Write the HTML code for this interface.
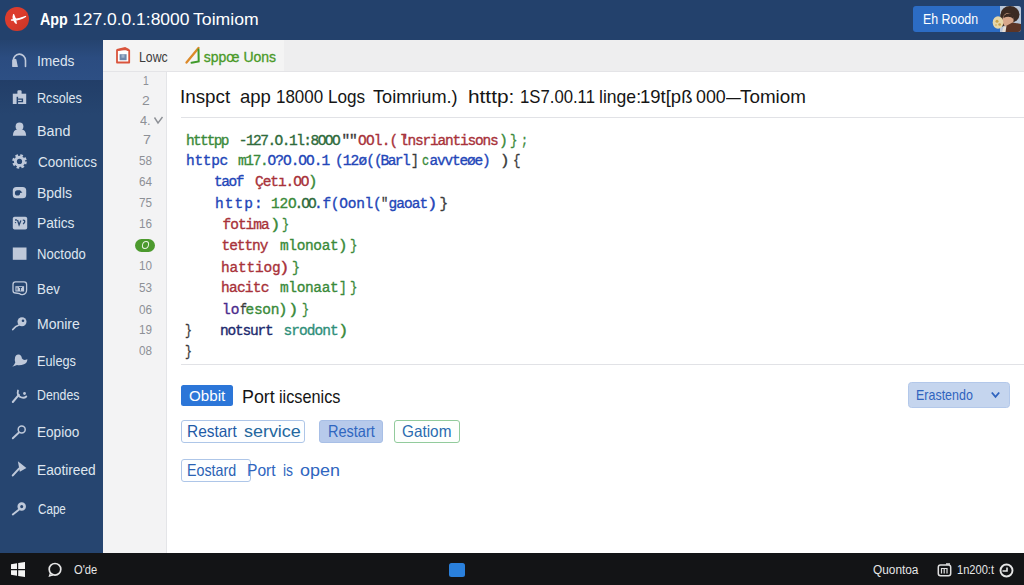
<!DOCTYPE html>
<html><head><meta charset="utf-8">
<style>
*{margin:0;padding:0;box-sizing:border-box}
html,body{width:1024px;height:585px;overflow:hidden;background:#fff;font-family:"Liberation Sans",sans-serif}
.a{position:absolute;white-space:pre}
</style></head><body>
<!-- backgrounds -->
<div class="a" style="left:0;top:0;width:1024px;height:40px;background:#23416c"></div>
<div class="a" style="left:0;top:40px;width:103px;height:513px;background:linear-gradient(#223e68 40px,#264570 75px)"></div>
<div class="a" style="left:0;top:40px;width:103px;height:40px;background:linear-gradient(#25436f,#2b4c80 45%,#2d4f84)"></div>
<div class="a" style="left:103px;top:40px;width:921px;height:31px;background:#eeeeef"></div>
<div class="a" style="left:103px;top:40px;width:181px;height:31px;background:#f4f4f4"></div>
<div class="a" style="left:103px;top:71px;width:64px;height:482px;background:#f3f3f4"></div>
<div class="a" style="left:166px;top:71px;width:1px;height:482px;background:#e4e5e8"></div>
<div class="a" style="left:103px;top:71px;width:921px;height:1px;background:#e4e4e7"></div>
<div class="a" style="left:181px;top:117px;width:843px;height:1px;background:#e1e2e6"></div>
<div class="a" style="left:181px;top:364px;width:843px;height:1px;background:#e1e2e6"></div>
<div class="a" style="left:0;top:553px;width:1024px;height:32px;background:#131416"></div>

<!-- top bar -->
<div class="a" style="left:4.800px;top:6.800px;width:24px;height:24.400px;border-radius:50%;background:linear-gradient(135deg,#dc3c2d 45%,#c83526)"></div>
<svg class="a" style="left:5px;top:7px" width="24" height="24" viewBox="0 0 24 24"><path d="M6.500 13 Q13 12.500 20.500 9.500 Q13 14 6.500 13z M8.600 7.600 Q7 12 11.200 16.400 Q10.800 12 8.600 7.600z" stroke="#fff" stroke-width="1.300" fill="#fff" stroke-linejoin="round"/></svg>
<div class="a" style="left:913px;top:6px;width:108px;height:26px;border-radius:3px;background:#2c6cc4"></div>
<div class="a" style="left:999.500px;top:6px;width:21.500px;height:26px;border-radius:0 3px 3px 0;overflow:hidden;background:#b9c6d8">
<svg style="position:absolute;left:0;top:0" width="22" height="26" viewBox="9.500 0 22 26">
<ellipse cx="19.500" cy="8.500" rx="9.500" ry="8.500" fill="#3b2a22"/>
<path d="M10 8 q-1 8 1 13 l4 -2z" fill="#3b2a22"/>
<ellipse cx="17.500" cy="14" rx="5.600" ry="7" fill="#d8a78b"/>
<path d="M13 10 q4 -4 9 -2 l1 5 q-4 -4 -10 -1z" fill="#3b2a22"/>
<path d="M12 26 L14.500 20.500 L22 16.500 L31 18 V26z" fill="#5b3526"/>
<path d="M11.500 26 l1.500 -5 l3 -1.200 l-1 6.200z" fill="#e8e0d6"/>
</svg></div>
<svg class="a" style="left:991px;top:15px" width="14" height="15" viewBox="0 0 14 15"><ellipse cx="7" cy="7.500" rx="5.300" ry="6.200" fill="#e6d6a8"/><circle cx="6" cy="6.200" r="1.500" fill="#c9a24a"/><circle cx="8.600" cy="9.500" r="1.300" fill="#c9a24a"/><circle cx="5" cy="10" r="1" fill="#d6b870"/></svg>

<!-- sidebar icons -->
<svg class="a" style="left:0;top:40px" width="36" height="513" viewBox="0 40 36 513">
<g fill="none" stroke="#bfc9da" stroke-linecap="round">
<!-- imeds: arch + block -->
<path d="M13.200 66 V61 a6 6.500 0 0 1 12.300 -.5 V66.500" stroke-width="1.600"/>
<!-- monire -->
<path d="M12.800 329.500 Q15.500 326 19 325" stroke-width="1.800"/>
<!-- dendes wrench -->
<path d="M12.800 402 L18.800 394.800" stroke-width="2"/><path d="M18 390.500 q-1.500 5.500 3.500 7 q3 .8 4.800 -1" stroke-width="1.800"/>
<!-- eopioo magnifier -->
<path d="M12.800 438.300 L18.700 432.800" stroke-width="1.900"/><circle cx="21.700" cy="429.600" r="3.500" stroke-width="1.500"/>
<!-- eaotireed -->
<path d="M12.800 475.400 L19 468.600" stroke-width="2.100"/>
<!-- cape -->
<path d="M12.800 514.500 L18.800 509.800" stroke-width="2"/><circle cx="21.700" cy="506.600" r="2.900" stroke-width="2.700"/>
</g>
<g fill="#bfc9da">
<path d="M12.300 66.900 V60 q2 -2 4 -.8 L17.900 66.900z"/>
<!-- rcsoles -->
<rect x="12.800" y="93.700" width="13.400" height="10.300"/><rect x="17.400" y="90.200" width="4.200" height="4.500" rx="1.200"/>
<!-- band -->
<circle cx="19.500" cy="126.500" r="3.900"/><path d="M12.800 135.800 q.5 -6.400 4.500 -6.400 h4.400 q4 0 4.500 6.400 z"/>
<!-- gear -->
<circle cx="19.500" cy="161.400" r="5.600"/><circle cx="19.500" cy="161.400" r="6" fill="none" stroke="#bfc9da" stroke-width="2.600" stroke-dasharray="2.600 2.110"/>
<!-- bpdls -->
<rect x="12.800" y="187" width="13.400" height="11.300" rx="3.600"/>
<!-- patics -->
<rect x="12.800" y="216.800" width="14.400" height="12.800" rx="1.800"/>
<!-- noctodo -->
<rect x="12.800" y="247.500" width="13.700" height="12.300"/>
<!-- monire head -->
<circle cx="22" cy="321.800" r="4.500"/>
<!-- eulegs -->
<path d="M18.500 354.600 a3.300 3.300 0 0 1 3.300 3.600 q1 1.600 3 1.800 l2.600 -.8 q-.2 3.800 -3.400 5 q-3.500 1.400 -7 .8 l-4.700 1.800 q2.200 -2.400 3 -4.400 q-1 -2.200 -.3 -4.400 a3.300 3.300 0 0 1 3.500 -3.400z"/>
<!-- eaotireed head -->
<path d="M17.900 461.300 L26.400 467.900 L19.800 471.700 Z"/>
<circle cx="24.500" cy="393.500" r="1.400"/>
</g>
<g fill="#264570" stroke="none">
<rect x="16.600" y="96.800" width="1.500" height="7.200"/><path d="M18.100 98.600 h5 v3.600 h-5 v-1.100 h3.600 v-1.300 h-3.600z"/>
<circle cx="19.500" cy="161.400" r="2.600"/>
<path d="M17.500 190.300 a2.600 2.600 0 1 0 2.600 2.600 l2.300 -.4 l-2.400 -2.300 z"/>
<circle cx="23" cy="320.800" r="1.300"/>
<circle cx="16" cy="220" r=".9"/><circle cx="15.500" cy="222.600" r=".7"/>
</g>
<path d="M17.500 220 l1.600 4.800 l1.800 -4.200 M22.800 220.300 q2.500 -.5 1.800 1.800 l-1.400 2" stroke="#264570" stroke-width="1.300" fill="none"/>
<!-- bev -->
<path d="M15.500 281.900 H24 q2.600 0 2.600 2.600 V290 q0 4 -4 4.600 q-2 .4 -3 -1 l-4 -.6 q-2.600 0 -2.600 -2.600 V284.500 q0 -2.600 2.500 -2.600z" fill="none" stroke="#bfc9da" stroke-width="1.300"/>
<rect x="15.400" y="286.200" width="8.700" height="5.300" fill="#bfc9da"/>
<path d="M17 287.500 v3 M19 287.500 h3 M20.500 287.500 v3.200" stroke="#264570" stroke-width=".9" fill="none"/>
</svg>

<!-- tabs -->
<svg class="a" style="left:115px;top:46px" width="17" height="19" viewBox="0 0 17 19"><path d="M2 4.200 L11 3.200 L14.200 4.500 V16.500 H2z" fill="#fff" stroke="#d9543c" stroke-width="1.800" stroke-linejoin="round"/><path d="M2 4 L10 2.200 L14 4.200" stroke="#d9543c" stroke-width="2.200" fill="none"/><rect x="4.600" y="8.200" width="7" height="6" fill="#6f88ab"/><rect x="6.500" y="8.200" width="3" height="3.500" fill="#9fb3cc"/></svg>
<svg class="a" style="left:184px;top:46px" width="18" height="19" viewBox="0 0 18 19"><path d="M2.500 16.500 L14.500 2" stroke="#dc8a2a" stroke-width="2.300" fill="none" stroke-linecap="round"/><path d="M14.500 3.500 L14.700 15.500 L7.500 16.800" stroke="#3f9a2a" stroke-width="2" fill="none" stroke-linecap="round"/></svg>

<!-- gutter extras -->
<svg class="a" style="left:153px;top:116px" width="11" height="9" viewBox="0 0 11 9"><path d="M1.500 1.500 L5 7 L9.500 1" stroke="#8d9096" stroke-width="1.400" fill="none"/></svg>
<div class="a" style="left:135px;top:238.500px;width:19.500px;height:13px;border-radius:6.500px;background:#4c9a2e"></div>
<div class="a" style="left:141.500px;top:241px;width:7px;height:8px;border-radius:50%;border:1.300px solid #e9f3e2;transform:skewX(-10deg)"></div>

<!-- controls -->
<div class="a" style="left:180.500px;top:384.500px;width:52px;height:21px;border-radius:2.500px;background:#2c76d8"></div>
<div class="a" style="left:908px;top:382px;width:102px;height:25.500px;border-radius:3.500px;background:#c5d5ee;border:1px solid #b3c8ea"></div>
<svg class="a" style="left:990px;top:390px" width="11" height="9" viewBox="0 0 11 9"><path d="M1.800 2.500 L5.500 6.800 L9.200 2.500" stroke="#2f63be" stroke-width="1.800" fill="none"/></svg>
<div class="a" style="left:180.500px;top:419.500px;width:124.500px;height:23.500px;border-radius:3px;border:1px solid #aec6e8;background:#fdfeff"></div>
<div class="a" style="left:318.500px;top:419.500px;width:64.500px;height:23.500px;border-radius:3px;background:#b7caeb;border:1px solid #a8bfe6"></div>
<div class="a" style="left:393.500px;top:419.500px;width:66.500px;height:23.500px;border-radius:3px;border:1.200px solid #92cb9c;background:#fdfffd"></div>
<div class="a" style="left:180.500px;top:458.500px;width:70px;height:23.500px;border-radius:3px;border:1px solid #aec6e8;background:#fdfeff"></div>

<!-- taskbar -->
<svg class="a" style="left:10.500px;top:562px" width="14" height="15" viewBox="0 0 14 15"><path d="M0 2.200 L6 1.200 V7 H0z M7.200 1 L14 0 V7 H7.200z M0 8.200 H6 V13.800 L0 12.800z M7.200 8.200 H14 V15 L7.200 14z" fill="#f4f4f4"/></svg>
<svg class="a" style="left:47px;top:561px" width="16" height="17" viewBox="0 0 16 17"><circle cx="8" cy="8.300" r="5.800" stroke="#e6e6e6" stroke-width="1.700" fill="none"/><path d="M3.500 12 L2.500 15 L6 13.800" stroke="#e6e6e6" stroke-width="1.300" fill="none"/></svg>
<div class="a" style="left:448.500px;top:562.500px;width:16.500px;height:14px;border-radius:2.500px;background:#2a80dc"></div>
<svg class="a" style="left:937px;top:563px" width="15" height="15" viewBox="0 0 15 15"><rect x="1.300" y="2" width="12.400" height="10.800" rx="2.200" stroke="#e0e0e0" stroke-width="1.500" fill="none"/><path d="M4.500 10.500 V5.500 h5.500 v5 M7.200 5.500 v5" stroke="#e0e0e0" stroke-width="1.200" fill="none"/><path d="M9 1 h4" stroke="#e0e0e0" stroke-width="1.500"/></svg>
<svg class="a" style="left:998px;top:562px" width="17" height="17" viewBox="0 0 17 17"><circle cx="8.500" cy="8.500" r="6" stroke="#e6e6e6" stroke-width="1.900" fill="none"/><path d="M4.500 9 H9 V5.500" stroke="#e6e6e6" stroke-width="1.600" fill="none"/></svg>

<div class="a" style='left:39.50px;top:8.61px;font:bold 17px/21px "Liberation Sans",sans-serif;color:#fff;transform-origin:0 0;transform:scale(0.8420,1);'>App</div>
<div class="a" style='left:72.72px;top:8.61px;font:normal 17px/21px "Liberation Sans",sans-serif;color:#fff;transform-origin:0 0;transform:scale(1.0269,1);'>127.0.0.1:8000</div>
<div class="a" style='left:193.00px;top:8.61px;font:normal 17px/21px "Liberation Sans",sans-serif;color:#fff;transform-origin:0 0;transform:scale(1.0376,1);'>Toimiom</div>
<div class="a" style='left:922.62px;top:9.90px;font:normal 14px/18px "Liberation Sans",sans-serif;color:#fff;transform-origin:0 0;transform:scale(0.8846,1);'>Eh Roodn</div>
<div class="a" style='left:37.02px;top:52.15px;font:normal 14px/18px "Liberation Sans",sans-serif;color:#dfe5ef;transform-origin:0 0;transform:scale(0.9832,1);'>Imeds</div>
<div class="a" style='left:37.10px;top:88.65px;font:normal 14px/18px "Liberation Sans",sans-serif;color:#dfe5ef;transform-origin:0 0;transform:scale(0.9018,1);'>Rcsoles</div>
<div class="a" style='left:36.98px;top:121.65px;font:normal 14px/18px "Liberation Sans",sans-serif;color:#dfe5ef;transform-origin:0 0;transform:scale(1.0191,1);'>Band</div>
<div class="a" style='left:38.00px;top:153.15px;font:normal 14px/18px "Liberation Sans",sans-serif;color:#dfe5ef;transform-origin:0 0;transform:scale(0.9598,1);'>Coonticcs</div>
<div class="a" style='left:37.00px;top:184.15px;font:normal 14px/18px "Liberation Sans",sans-serif;color:#dfe5ef;'>Bpdls</div>
<div class="a" style='left:37.02px;top:214.15px;font:normal 14px/18px "Liberation Sans",sans-serif;color:#dfe5ef;transform-origin:0 0;transform:scale(0.9832,1);'>Patics</div>
<div class="a" style='left:37.07px;top:244.90px;font:normal 14px/18px "Liberation Sans",sans-serif;color:#dfe5ef;transform-origin:0 0;transform:scale(0.9346,1);'>Noctodo</div>
<div class="a" style='left:37.05px;top:279.90px;font:normal 14px/18px "Liberation Sans",sans-serif;color:#dfe5ef;transform-origin:0 0;transform:scale(0.9514,1);'>Bev</div>
<div class="a" style='left:37.00px;top:314.90px;font:normal 14px/18px "Liberation Sans",sans-serif;color:#dfe5ef;'>Monire</div>
<div class="a" style='left:37.09px;top:351.65px;font:normal 14px/18px "Liberation Sans",sans-serif;color:#dfe5ef;transform-origin:0 0;transform:scale(0.9089,1);'>Eulegs</div>
<div class="a" style='left:37.12px;top:386.15px;font:normal 14px/18px "Liberation Sans",sans-serif;color:#dfe5ef;transform-origin:0 0;transform:scale(0.8782,1);'>Dendes</div>
<div class="a" style='left:37.03px;top:423.15px;font:normal 14px/18px "Liberation Sans",sans-serif;color:#dfe5ef;transform-origin:0 0;transform:scale(0.9695,1);'>Eopioo</div>
<div class="a" style='left:37.02px;top:460.65px;font:normal 14px/18px "Liberation Sans",sans-serif;color:#dfe5ef;transform-origin:0 0;transform:scale(0.9803,1);'>Eaotireed</div>
<div class="a" style='left:38.00px;top:499.90px;font:normal 14px/18px "Liberation Sans",sans-serif;color:#dfe5ef;transform-origin:0 0;transform:scale(0.8313,1);'>Cape</div>
<div class="a" style='left:139.26px;top:47.81px;font:normal 14.7px/18px "Liberation Sans",sans-serif;color:#3c3c3c;transform-origin:0 0;transform:scale(0.8378,1);'>Lowc</div>
<div class="a" style='left:203.75px;top:48.15px;font:normal 14px/18px "Liberation Sans",sans-serif;color:#4a9a28;-webkit-text-stroke:0.3px #4a9a28;'>sppœ Uons</div>
<div class="a" style='left:142.60px;top:72.70px;font:normal 13px/16px "Liberation Sans",sans-serif;color:#8d9096;transform-origin:0 0;transform:scale(0.8000,1);'>1</div>
<div class="a" style='left:142.00px;top:92.70px;font:normal 13px/16px "Liberation Sans",sans-serif;color:#8d9096;transform-origin:0 0;transform:scale(1.0714,1);'>2</div>
<div class="a" style='left:140.00px;top:112.70px;font:normal 13px/16px "Liberation Sans",sans-serif;color:#8d9096;transform-origin:0 0;transform:scale(0.9775,1);'>4.</div>
<div class="a" style='left:142.60px;top:131.90px;font:normal 13px/16px "Liberation Sans",sans-serif;color:#8d9096;transform-origin:0 0;transform:scale(1.1000,1);'>7</div>
<div class="a" style='left:139.20px;top:152.70px;font:normal 13px/16px "Liberation Sans",sans-serif;color:#8d9096;transform-origin:0 0;transform:scale(0.8995,1);'>58</div>
<div class="a" style='left:139.20px;top:173.70px;font:normal 13px/16px "Liberation Sans",sans-serif;color:#8d9096;transform-origin:0 0;transform:scale(0.8995,1);'>64</div>
<div class="a" style='left:139.20px;top:194.70px;font:normal 13px/16px "Liberation Sans",sans-serif;color:#8d9096;transform-origin:0 0;transform:scale(0.8995,1);'>75</div>
<div class="a" style='left:139.20px;top:215.90px;font:normal 13px/16px "Liberation Sans",sans-serif;color:#8d9096;transform-origin:0 0;transform:scale(0.8995,1);'>16</div>
<div class="a" style='left:139.20px;top:258.20px;font:normal 13px/16px "Liberation Sans",sans-serif;color:#8d9096;transform-origin:0 0;transform:scale(0.8995,1);'>10</div>
<div class="a" style='left:139.20px;top:280.20px;font:normal 13px/16px "Liberation Sans",sans-serif;color:#8d9096;transform-origin:0 0;transform:scale(0.8995,1);'>53</div>
<div class="a" style='left:139.20px;top:301.70px;font:normal 13px/16px "Liberation Sans",sans-serif;color:#8d9096;transform-origin:0 0;transform:scale(0.8995,1);'>06</div>
<div class="a" style='left:139.20px;top:322.20px;font:normal 13px/16px "Liberation Sans",sans-serif;color:#8d9096;transform-origin:0 0;transform:scale(0.8995,1);'>19</div>
<div class="a" style='left:139.20px;top:343.20px;font:normal 13px/16px "Liberation Sans",sans-serif;color:#8d9096;transform-origin:0 0;transform:scale(0.8995,1);'>08</div>
<div class="a" style='left:179.98px;top:84.89px;font:normal 18.5px/23px "Liberation Sans",sans-serif;color:#151515;transform-origin:0 0;transform:scale(1.0162,1);'>Inspct</div>
<div class="a" style='left:240.00px;top:84.89px;font:normal 18.5px/23px "Liberation Sans",sans-serif;color:#151515;'>app</div>
<div class="a" style='left:276.08px;top:84.89px;font:normal 18.5px/23px "Liberation Sans",sans-serif;color:#151515;transform-origin:0 0;transform:scale(0.9172,1);'>18000</div>
<div class="a" style='left:328.07px;top:84.89px;font:normal 18.5px/23px "Liberation Sans",sans-serif;color:#151515;transform-origin:0 0;transform:scale(0.9262,1);'>Logs</div>
<div class="a" style='left:373.00px;top:84.89px;font:normal 18.5px/23px "Liberation Sans",sans-serif;color:#151515;transform-origin:0 0;transform:scale(0.9806,1);'>Toimrium.)</div>
<div class="a" style='left:467.67px;top:84.89px;font:normal 18.5px/23px "Liberation Sans",sans-serif;color:#151515;transform-origin:0 0;transform:scale(1.1257,1);'>htttp:</div>
<div class="a" style='left:519.60px;top:84.89px;font:normal 18.5px/23px "Liberation Sans",sans-serif;color:#151515;transform-origin:0 0;transform:scale(0.9034,1);'>1S7.00.11</div>
<div class="a" style='left:599.05px;top:84.89px;font:normal 18.5px/23px "Liberation Sans",sans-serif;color:#151515;transform-origin:0 0;transform:scale(0.9504,1);'>linge:</div>
<div class="a" style='left:640.00px;top:84.89px;font:normal 18.5px/23px "Liberation Sans",sans-serif;color:#151515;'>19t[pß</div>
<div class="a" style='left:696.00px;top:84.89px;font:normal 18.5px/23px "Liberation Sans",sans-serif;color:#151515;transform-origin:0 0;transform:scale(0.9648,1);'>000</div>
<div class="a" style='left:726.00px;top:84.89px;font:normal 18.5px/23px "Liberation Sans",sans-serif;color:#151515;transform-origin:0 0;transform:scale(0.8000,1);'>—</div>
<div class="a" style='left:739.50px;top:84.89px;font:normal 18.5px/23px "Liberation Sans",sans-serif;color:#151515;transform-origin:0 0;transform:scale(1.0179,1);'>Tomiom</div>
<div class="a" style='left:186.00px;top:130.99px;font:normal 14.5px/18px "Liberation Mono",sans-serif;color:#3a8a3a;letter-spacing:-1.751px;-webkit-text-stroke:0.35px #3a8a3a;transform-origin:0 0;transform:scale(1.0000,1.05);'>htttpp</div>
<div class="a" style='left:238.75px;top:130.99px;font:normal 14.5px/18px "Liberation Mono",sans-serif;color:#2f6b3c;letter-spacing:-1.528px;-webkit-text-stroke:0.35px #2f6b3c;transform-origin:0 0;transform:scale(1.0000,1.05);'>-127.O.1l:8OOO</div>
<div class="a" style='left:341.50px;top:130.99px;font:normal 14.5px/18px "Liberation Mono",sans-serif;color:#3a3a3a;letter-spacing:-1.201px;-webkit-text-stroke:0.35px #3a3a3a;transform-origin:0 0;transform:scale(1.0000,1.05);'>""</div>
<div class="a" style='left:358.00px;top:130.99px;font:normal 14.5px/18px "Liberation Mono",sans-serif;color:#a8323a;letter-spacing:-0.826px;-webkit-text-stroke:0.35px #a8323a;transform-origin:0 0;transform:scale(1.0000,1.05);'>OOl.(</div>
<div class="a" style='left:399.50px;top:130.99px;font:normal 14.5px/18px "Liberation Mono",sans-serif;color:#a8323a;letter-spacing:-7.201px;-webkit-text-stroke:0.35px #a8323a;transform-origin:0 0;transform:scale(1.0000,1.05);'>l'</div>
<div class="a" style='left:407.50px;top:130.99px;font:normal 14.5px/18px "Liberation Mono",sans-serif;color:#a8323a;letter-spacing:-1.201px;-webkit-text-stroke:0.35px #a8323a;transform-origin:0 0;transform:scale(1.0000,1.05);'>nsriantisons</div>
<div class="a" style='left:499.46px;top:130.99px;font:normal 14.5px/18px "Liberation Mono",sans-serif;color:#3a8a3a;-webkit-text-stroke:0.35px #3a8a3a;transform-origin:0 0;transform:scale(1.0200,1.05);'>)</div>
<div class="a" style='left:510.14px;top:130.99px;font:normal 14.5px/18px "Liberation Mono",sans-serif;color:#3a8a3a;-webkit-text-stroke:0.35px #3a8a3a;transform-origin:0 0;transform:scale(0.8571,1.05);'>}</div>
<div class="a" style='left:521.10px;top:130.99px;font:normal 14.5px/18px "Liberation Mono",sans-serif;color:#3a8a3a;-webkit-text-stroke:0.35px #3a8a3a;transform-origin:0 0;transform:scale(0.8000,1.05);'>;</div>
<div class="a" style='left:186.00px;top:151.49px;font:normal 14.5px/18px "Liberation Mono",sans-serif;color:#2346b8;letter-spacing:-0.326px;-webkit-text-stroke:0.35px #2346b8;transform-origin:0 0;transform:scale(1.0000,1.05);'>httpc</div>
<div class="a" style='left:238.00px;top:151.49px;font:normal 14.5px/18px "Liberation Mono",sans-serif;color:#3a8a3a;letter-spacing:-1.368px;-webkit-text-stroke:0.35px #3a8a3a;transform-origin:0 0;transform:scale(1.0000,1.05);'>m17.</div>
<div class="a" style='left:267.50px;top:151.49px;font:normal 14.5px/18px "Liberation Mono",sans-serif;color:#2346b8;letter-spacing:-0.987px;-webkit-text-stroke:0.35px #2346b8;transform-origin:0 0;transform:scale(1.0000,1.05);'>O?O.OO.1</div>
<div class="a" style='left:335.00px;top:151.49px;font:normal 14.5px/18px "Liberation Mono",sans-serif;color:#2346b8;letter-spacing:-0.901px;-webkit-text-stroke:0.35px #2346b8;transform-origin:0 0;transform:scale(1.0000,1.05);'>(12ø((</div>
<div class="a" style='left:380.50px;top:151.49px;font:normal 14.5px/18px "Liberation Mono",sans-serif;color:#2346b8;letter-spacing:-1.535px;-webkit-text-stroke:0.35px #2346b8;transform-origin:0 0;transform:scale(1.0000,1.05);'>Barl</div>
<div class="a" style='left:410.60px;top:151.49px;font:normal 14.5px/18px "Liberation Mono",sans-serif;color:#3a3a3a;-webkit-text-stroke:0.35px #3a3a3a;transform-origin:0 0;transform:scale(0.9000,1.05);'>]</div>
<div class="a" style='left:422.00px;top:151.49px;font:normal 14.5px/18px "Liberation Mono",sans-serif;color:#3a8a3a;-webkit-text-stroke:0.35px #3a8a3a;transform-origin:0 0;transform:scale(0.8125,1.05);'>c</div>
<div class="a" style='left:429.50px;top:151.49px;font:normal 14.5px/18px "Liberation Mono",sans-serif;color:#2346b8;letter-spacing:-1.201px;-webkit-text-stroke:0.35px #2346b8;transform-origin:0 0;transform:scale(1.0000,1.05);'>avvteøe)</div>
<div class="a" style='left:500.30px;top:151.49px;font:normal 14.5px/18px "Liberation Mono",sans-serif;color:#3a3a3a;-webkit-text-stroke:0.35px #3a3a3a;transform-origin:0 0;transform:scale(1.1000,1.05);'>)</div>
<div class="a" style='left:513.14px;top:151.49px;font:normal 14.5px/18px "Liberation Mono",sans-serif;color:#3a3a3a;-webkit-text-stroke:0.35px #3a3a3a;transform-origin:0 0;transform:scale(0.8571,1.05);'>{</div>
<div class="a" style='left:214.00px;top:172.49px;font:normal 14.5px/18px "Liberation Mono",sans-serif;color:#2346b8;letter-spacing:-1.451px;-webkit-text-stroke:0.35px #2346b8;transform-origin:0 0;transform:scale(1.0000,1.05);'>taof</div>
<div class="a" style='left:255.00px;top:172.49px;font:normal 14.5px/18px "Liberation Mono",sans-serif;color:#a8323a;letter-spacing:-1.076px;-webkit-text-stroke:0.35px #a8323a;transform-origin:0 0;transform:scale(1.0000,1.05);'>Çetı.OO</div>
<div class="a" style='left:308.30px;top:172.49px;font:normal 14.5px/18px "Liberation Mono",sans-serif;color:#3a8a3a;-webkit-text-stroke:0.35px #3a8a3a;transform-origin:0 0;transform:scale(1.1000,1.05);'>)</div>
<div class="a" style='left:215.00px;top:193.99px;font:normal 14.5px/18px "Liberation Mono",sans-serif;color:#2346b8;letter-spacing:1.049px;-webkit-text-stroke:0.35px #2346b8;transform-origin:0 0;transform:scale(1.0000,1.05);'>http:</div>
<div class="a" style='left:271.00px;top:193.99px;font:normal 14.5px/18px "Liberation Mono",sans-serif;color:#3a8a3a;letter-spacing:-0.201px;-webkit-text-stroke:0.35px #3a8a3a;transform-origin:0 0;transform:scale(1.0000,1.05);'>12O</div>
<div class="a" style='left:294.50px;top:193.99px;font:normal 14.5px/18px "Liberation Mono",sans-serif;color:#2f6b3c;letter-spacing:-1.951px;-webkit-text-stroke:0.35px #2f6b3c;transform-origin:0 0;transform:scale(1.0000,1.05);'>.OO</div>
<div class="a" style='left:314.00px;top:193.99px;font:normal 14.5px/18px "Liberation Mono",sans-serif;color:#2346b8;letter-spacing:-0.273px;-webkit-text-stroke:0.35px #2346b8;transform-origin:0 0;transform:scale(1.0000,1.05);'>.f(Oonl(</div>
<div class="a" style='left:381.17px;top:193.99px;font:normal 14.5px/18px "Liberation Mono",sans-serif;color:#3a3a3a;-webkit-text-stroke:0.35px #3a3a3a;transform-origin:0 0;transform:scale(0.8333,1.05);'>"</div>
<div class="a" style='left:388.50px;top:193.99px;font:normal 14.5px/18px "Liberation Mono",sans-serif;color:#2346b8;letter-spacing:-0.951px;-webkit-text-stroke:0.35px #2346b8;transform-origin:0 0;transform:scale(1.0000,1.05);'>gaoat</div>
<div class="a" style='left:426.60px;top:193.99px;font:normal 14.5px/18px "Liberation Mono",sans-serif;color:#2346b8;-webkit-text-stroke:0.35px #2346b8;transform-origin:0 0;transform:scale(1.2000,1.05);'>)</div>
<div class="a" style='left:439.50px;top:193.99px;font:normal 14.5px/18px "Liberation Mono",sans-serif;color:#3a3a3a;-webkit-text-stroke:0.35px #3a3a3a;transform-origin:0 0;transform:scale(1.0000,1.05);'>}</div>
<div class="a" style='left:222.50px;top:214.99px;font:normal 14.5px/18px "Liberation Mono",sans-serif;color:#a8323a;letter-spacing:-1.001px;-webkit-text-stroke:0.35px #a8323a;transform-origin:0 0;transform:scale(1.0000,1.05);'>fotima</div>
<div class="a" style='left:269.60px;top:214.99px;font:normal 14.5px/18px "Liberation Mono",sans-serif;color:#3a8a3a;-webkit-text-stroke:0.35px #3a8a3a;transform-origin:0 0;transform:scale(1.2000,1.05);'>)</div>
<div class="a" style='left:282.18px;top:214.99px;font:normal 14.5px/18px "Liberation Mono",sans-serif;color:#3a8a3a;-webkit-text-stroke:0.35px #3a8a3a;transform-origin:0 0;transform:scale(0.8214,1.05);'>}</div>
<div class="a" style='left:221.50px;top:236.24px;font:normal 14.5px/18px "Liberation Mono",sans-serif;color:#a8323a;letter-spacing:-1.051px;-webkit-text-stroke:0.35px #a8323a;transform-origin:0 0;transform:scale(1.0000,1.05);'>tettny</div>
<div class="a" style='left:280.00px;top:236.24px;font:normal 14.5px/18px "Liberation Mono",sans-serif;color:#3a8a3a;letter-spacing:-0.368px;-webkit-text-stroke:0.35px #3a8a3a;transform-origin:0 0;transform:scale(1.0000,1.05);'>mlonoat</div>
<div class="a" style='left:337.80px;top:236.24px;font:normal 14.5px/18px "Liberation Mono",sans-serif;color:#3a8a3a;-webkit-text-stroke:0.35px #3a8a3a;transform-origin:0 0;transform:scale(1.1000,1.05);'>)</div>
<div class="a" style='left:350.14px;top:236.24px;font:normal 14.5px/18px "Liberation Mono",sans-serif;color:#3a8a3a;-webkit-text-stroke:0.35px #3a8a3a;transform-origin:0 0;transform:scale(0.8571,1.05);'>}</div>
<div class="a" style='left:221.00px;top:257.99px;font:normal 14.5px/18px "Liberation Mono",sans-serif;color:#a8323a;letter-spacing:-0.201px;-webkit-text-stroke:0.35px #a8323a;transform-origin:0 0;transform:scale(1.0000,1.05);'>hattiog</div>
<div class="a" style='left:279.10px;top:257.99px;font:normal 14.5px/18px "Liberation Mono",sans-serif;color:#a8323a;-webkit-text-stroke:0.35px #a8323a;transform-origin:0 0;transform:scale(1.2000,1.05);'>)</div>
<div class="a" style='left:292.07px;top:257.99px;font:normal 14.5px/18px "Liberation Mono",sans-serif;color:#3a8a3a;-webkit-text-stroke:0.35px #3a8a3a;transform-origin:0 0;transform:scale(0.9286,1.05);'>}</div>
<div class="a" style='left:221.00px;top:278.49px;font:normal 14.5px/18px "Liberation Mono",sans-serif;color:#a8323a;letter-spacing:-0.751px;-webkit-text-stroke:0.35px #a8323a;transform-origin:0 0;transform:scale(1.0000,1.05);'>hacitc</div>
<div class="a" style='left:280.00px;top:278.49px;font:normal 14.5px/18px "Liberation Mono",sans-serif;color:#3a8a3a;letter-spacing:-0.368px;-webkit-text-stroke:0.35px #3a8a3a;transform-origin:0 0;transform:scale(1.0000,1.05);'>mlonaat</div>
<div class="a" style='left:339.10px;top:278.49px;font:normal 14.5px/18px "Liberation Mono",sans-serif;color:#3a8a3a;-webkit-text-stroke:0.35px #3a8a3a;transform-origin:0 0;transform:scale(0.9000,1.05);'>]</div>
<div class="a" style='left:350.14px;top:278.49px;font:normal 14.5px/18px "Liberation Mono",sans-serif;color:#3a8a3a;-webkit-text-stroke:0.35px #3a8a3a;transform-origin:0 0;transform:scale(0.8571,1.05);'>}</div>
<div class="a" style='left:222.00px;top:300.24px;font:normal 14.5px/18px "Liberation Mono",sans-serif;color:#4b2b8c;letter-spacing:0.049px;-webkit-text-stroke:0.35px #4b2b8c;transform-origin:0 0;transform:scale(1.0000,1.05);'>lo</div>
<div class="a" style='left:239.50px;top:300.24px;font:normal 14.5px/18px "Liberation Mono",sans-serif;color:#3a3a3a;-webkit-text-stroke:0.35px #3a3a3a;transform-origin:0 0;transform:scale(0.8000,1.05);'>f</div>
<div class="a" style='left:245.50px;top:300.24px;font:normal 14.5px/18px "Liberation Mono",sans-serif;color:#3a8a3a;letter-spacing:-0.285px;-webkit-text-stroke:0.35px #3a8a3a;transform-origin:0 0;transform:scale(1.0000,1.05);'>eson</div>
<div class="a" style='left:277.80px;top:300.24px;font:normal 14.5px/18px "Liberation Mono",sans-serif;color:#3a8a3a;-webkit-text-stroke:0.35px #3a8a3a;transform-origin:0 0;transform:scale(1.1000,1.05);'>)</div>
<div class="a" style='left:287.60px;top:300.24px;font:normal 14.5px/18px "Liberation Mono",sans-serif;color:#3a8a3a;-webkit-text-stroke:0.35px #3a8a3a;transform-origin:0 0;transform:scale(1.2000,1.05);'>)</div>
<div class="a" style='left:302.18px;top:300.24px;font:normal 14.5px/18px "Liberation Mono",sans-serif;color:#3a8a3a;-webkit-text-stroke:0.35px #3a8a3a;transform-origin:0 0;transform:scale(0.8214,1.05);'>}</div>
<div class="a" style='left:184.70px;top:321.49px;font:normal 14.5px/18px "Liberation Mono",sans-serif;color:#3a3a3a;-webkit-text-stroke:0.35px #3a3a3a;transform-origin:0 0;transform:scale(0.8000,1.05);'>}</div>
<div class="a" style='left:220.00px;top:321.49px;font:normal 14.5px/18px "Liberation Mono",sans-serif;color:#1d2a6e;letter-spacing:-1.201px;-webkit-text-stroke:0.35px #1d2a6e;transform-origin:0 0;transform:scale(1.0000,1.05);'>notsurt</div>
<div class="a" style='left:283.50px;top:321.49px;font:normal 14.5px/18px "Liberation Mono",sans-serif;color:#2f8f7a;letter-spacing:-0.951px;-webkit-text-stroke:0.35px #2f8f7a;transform-origin:0 0;transform:scale(1.0000,1.05);'>srodont</div>
<div class="a" style='left:337.60px;top:321.49px;font:normal 14.5px/18px "Liberation Mono",sans-serif;color:#3a8a3a;-webkit-text-stroke:0.35px #3a8a3a;transform-origin:0 0;transform:scale(1.2000,1.05);'>)</div>
<div class="a" style='left:184.70px;top:341.99px;font:normal 14.5px/18px "Liberation Mono",sans-serif;color:#3a3a3a;-webkit-text-stroke:0.35px #3a3a3a;transform-origin:0 0;transform:scale(0.8000,1.05);'>}</div>
<div class="a" style='left:189.40px;top:386.58px;font:normal 14.5px/18px "Liberation Sans",sans-serif;color:#fff;transform-origin:0 0;transform:scale(1.0454,1);'>Obbit</div>
<div class="a" style='left:242.44px;top:384.59px;font:normal 18.5px/23px "Liberation Sans",sans-serif;color:#151515;transform-origin:0 0;transform:scale(0.9637,1);'>Port</div>
<div class="a" style='left:279.12px;top:384.59px;font:normal 18.5px/23px "Liberation Sans",sans-serif;color:#151515;transform-origin:0 0;transform:scale(0.8783,1);'>iicsenics</div>
<div class="a" style='left:915.74px;top:385.98px;font:normal 14.5px/18px "Liberation Sans",sans-serif;color:#2f63be;transform-origin:0 0;transform:scale(0.8595,1);'>Erastendo</div>
<div class="a" style='left:186.86px;top:421.28px;font:normal 16.5px/21px "Liberation Sans",sans-serif;color:#1f5aa6;transform-origin:0 0;transform:scale(0.9354,1);'>Restart</div>
<div class="a" style='left:244.00px;top:421.28px;font:normal 16.5px/21px "Liberation Sans",sans-serif;color:#23679e;transform-origin:0 0;transform:scale(1.0866,1);'>service</div>
<div class="a" style='left:327.52px;top:421.28px;font:normal 16.5px/21px "Liberation Sans",sans-serif;color:#2f66c0;transform-origin:0 0;transform:scale(0.8803,1);'>Restart</div>
<div class="a" style='left:401.90px;top:421.28px;font:normal 16.5px/21px "Liberation Sans",sans-serif;color:#2a6cb0;transform-origin:0 0;transform:scale(0.9287,1);'>Gatiom</div>
<div class="a" style='left:186.93px;top:460.38px;font:normal 16.5px/21px "Liberation Sans",sans-serif;color:#2a62b4;transform-origin:0 0;transform:scale(0.8655,1);'>Eostard</div>
<div class="a" style='left:246.55px;top:460.38px;font:normal 16.5px/21px "Liberation Sans",sans-serif;color:#2f66c0;transform-origin:0 0;transform:scale(0.9469,1);'>Port</div>
<div class="a" style='left:283.16px;top:460.38px;font:normal 16.5px/21px "Liberation Sans",sans-serif;color:#2f66c0;transform-origin:0 0;transform:scale(0.8438,1);'>is</div>
<div class="a" style='left:300.00px;top:460.38px;font:normal 16.5px/21px "Liberation Sans",sans-serif;color:#2f66c0;transform-origin:0 0;transform:scale(1.0868,1);'>open</div>
<div class="a" style='left:73.75px;top:562.17px;font:normal 12.5px/16px "Liberation Sans",sans-serif;color:#e6e6e6;transform-origin:0 0;transform:scale(0.8921,1);'>O'de</div>
<div class="a" style='left:872.50px;top:562.17px;font:normal 12.5px/16px "Liberation Sans",sans-serif;color:#e6e6e6;transform-origin:0 0;transform:scale(0.9478,1);'>Quontoa</div>
<div class="a" style='left:956.75px;top:562.17px;font:normal 12.5px/16px "Liberation Sans",sans-serif;color:#e6e6e6;transform-origin:0 0;transform:scale(0.8879,1);'>1n200:t</div>
</body></html>
